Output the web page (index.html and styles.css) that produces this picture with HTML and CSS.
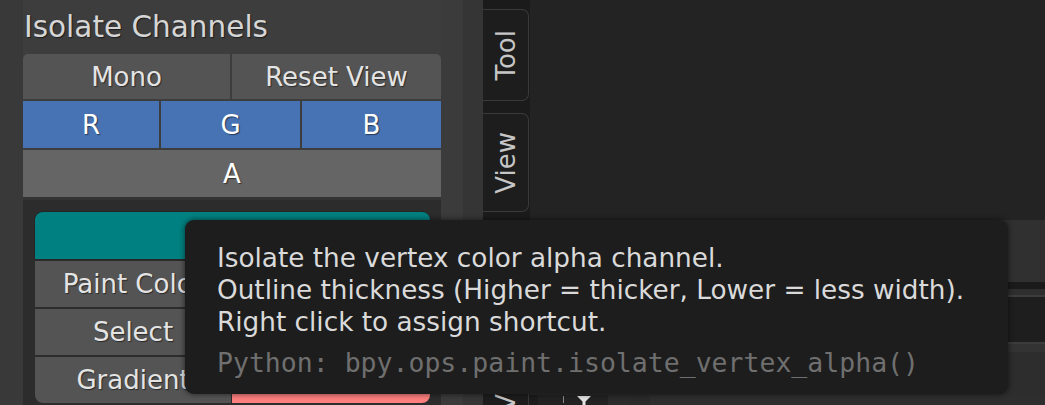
FILE: index.html
```html
<!DOCTYPE html>
<html>
<head>
<meta charset="utf-8">
<link rel="stylesheet" href="styles.css">
</head>
<body>
<div class="app">
  <aside class="sidebar">
    <section class="panel">
      <div class="panel-title">Isolate Channels</div>
      <div class="btn-row row-two">
        <div class="btn round-tl">Mono</div>
        <div class="btn round-tr">Reset View</div>
      </div>
      <div class="btn-row row-three">
        <div class="btn btn-blue">R</div>
        <div class="btn btn-blue">G</div>
        <div class="btn btn-blue">B</div>
      </div>
      <div class="btn-row row-one">
        <div class="btn btn-light">A</div>
      </div>
      <div class="box">
        <div class="btn btn-teal"></div>
        <div class="box-row">
          <div class="btn">Paint Color</div>
          <div class="btn"></div>
        </div>
        <div class="box-row">
          <div class="btn">Select</div>
          <div class="btn"></div>
        </div>
        <div class="box-row">
          <div class="btn round-bl">Gradient</div>
          <div class="btn btn-salmon round-br"></div>
        </div>
      </div>
    </section>
    <div class="gutter"></div>
  </aside>
  <div class="scroll-edge"></div>
  <nav class="tabs">
    <div class="tab tab-tool"><span>Tool</span></div>
    <div class="tab tab-view"><span>View</span></div>
    <div class="tab tab-third"><span>V</span></div>
  </nav>
  <main class="main">
    <div class="viewport"></div>
    <div class="lower">
      <div class="lower-header"></div>
      <div class="lower-sep"></div>
      <div class="lower-strip"></div>
      <div class="lower-line"></div>
      <div class="lower-field"></div>
      <div class="lower-line"></div>
      <div class="lower-pad"></div>
      <div class="lower-body"></div>
      <div class="toolbar">
        <div class="tb-a"></div>
        <div class="tb-b">
          <span class="tb-tick"></span>
          <svg class="tb-icon" width="14" height="12" viewBox="0 0 14 12"><path d="M0 0 H14 L8.5 5.5 V12 H5.5 V5.5 Z" fill="#e2e2e2"/></svg>
        </div>
        <div class="tb-c"></div>
        <div class="tb-d"></div>
        <div class="tb-e"></div>
      </div>
    </div>
  </main>
</div>
<div class="tooltip">
  <div class="tip-line">Isolate the vertex color alpha channel.</div>
  <div class="tip-line">Outline thickness (Higher = thicker, Lower = less width).</div>
  <div class="tip-line">Right click to assign shortcut.</div>
  <div class="tip-line tip-python">Python: bpy.ops.paint.isolate_vertex_alpha()</div>
</div>
</body>
</html>
```
FILE: styles.css
```css
html, body {
  margin: 0;
  padding: 0;
}
body {
  width: 1045px;
  height: 405px;
  overflow: hidden;
  position: relative;
  background: #232323;
  font-family: "DejaVu Sans", "Liberation Sans", sans-serif;
}
.app {
  display: flex;
  height: 405px;
}
.sidebar {
  width: 463px;
  flex: none;
  display: flex;
  box-sizing: border-box;
  padding-left: 23px;
  background: #393939;
}
.panel {
  width: 418px;
  flex: none;
  display: flex;
  flex-direction: column;
  background: #3d3d3d;
}
.panel-title {
  height: 54px;
  box-sizing: border-box;
  padding: 11px 0 0 1px;
  font-size: 29.5px;
  line-height: 32px;
  color: #d6d6d6;
  text-shadow: 1px 1px 1px rgba(0, 0, 0, 0.55);
  white-space: nowrap;
  flex: none;
}
.gutter {
  width: 22px;
  flex: none;
  background: #3b3b3b;
}
.scroll-edge {
  width: 20px;
  flex: none;
  background: #353535;
}
.btn-row {
  display: grid;
  gap: 2px;
  margin-bottom: 2px;
  flex: none;
}
.row-two {
  grid-template-columns: 207fr 209fr;
  height: 45px;
}
.row-three {
  grid-template-columns: 136fr 139fr 139fr;
  height: 47px;
}
.row-one {
  height: 47px;
  margin-bottom: 0;
}
.btn {
  display: flex;
  align-items: center;
  justify-content: center;
  font-size: 26px;
  line-height: 32px;
  color: #e4e4e4;
  background: #545454;
  text-shadow: 1px 1px 1px rgba(0, 0, 0, 0.5);
  white-space: nowrap;
  overflow: hidden;
}
.btn-blue {
  background: #4772b3;
  color: #ffffff;
}
.btn-light {
  background: #656565;
  color: #ffffff;
}
.btn-teal {
  height: 47px;
  flex: none;
  background: #008080;
  border-radius: 8px 8px 0 0;
  box-shadow: 0 0 0 1px #262626;
}
.btn-salmon {
  background: #fd7f7f;
}
.round-tl { border-top-left-radius: 5px; }
.round-tr { border-top-right-radius: 5px; }
.round-bl { border-bottom-left-radius: 8px; }
.round-br { border-bottom-right-radius: 8px; }
.box {
  flex: 1;
  display: flex;
  flex-direction: column;
  gap: 2px;
  padding: 12px 11px 0 12px;
  background: #2c2c2c;
  border-top: 3px solid #333333;
}
.box-row {
  display: grid;
  grid-template-columns: 196fr 198fr;
  gap: 1px;
  height: 46px;
  flex: none;
}
.tabs {
  width: 47px;
  flex: none;
  box-sizing: border-box;
  padding-top: 9px;
  display: flex;
  flex-direction: column;
  gap: 12px;
  background: #1b1b1b;
  overflow: hidden;
}
.tab {
  width: 46px;
  flex: none;
  box-sizing: border-box;
  border: 1px solid #3a3a3a;
  border-left: none;
  border-radius: 0 7px 7px 0;
  display: flex;
  align-items: center;
  justify-content: center;
  background: #1d1d1d;
}
.tab span {
  writing-mode: vertical-rl;
  transform: rotate(180deg);
  font-size: 26px;
  line-height: 30px;
  color: #c6c6c6;
  white-space: nowrap;
}
.tab-tool { height: 92px; }
.tab-view { height: 99px; }
.tab-third {
  height: 195px;
  align-items: flex-end;
  padding-bottom: 6px;
}
.main {
  flex: 1;
  display: flex;
  flex-direction: column;
  min-width: 0;
}
.viewport {
  height: 220px;
  flex: none;
  background: #232323;
}
.lower {
  flex: 1;
  display: flex;
  flex-direction: column;
  overflow: hidden;
}
.lower-header { height: 62px; flex: none; background: #303030; }
.lower-sep { height: 7px; flex: none; background: #1a1a1a; }
.lower-strip { height: 6px; flex: none; background: #2e2e2e; }
.lower-line { height: 2px; flex: none; background: #3c3c3c; }
.lower-field { height: 45px; flex: none; background: #1e1e1e; }
.lower-pad { height: 8px; flex: none; background: #333333; }
.lower-body { height: 43px; flex: none; background: #2d2d2d; }
.toolbar {
  height: 20px;
  flex: none;
  display: flex;
  background: #2e2e2e;
}
.tb-a { width: 8px; background: #1c1c1c; }
.tb-b {
  width: 70px;
  background: #222222;
  display: flex;
  align-items: flex-start;
  padding: 1px 0 0 25px;
  box-sizing: border-box;
  gap: 13px;
}
.tb-tick {
  width: 1px;
  height: 7px;
  background: #8a8a8a;
}
.tb-icon { display: block; }
.tb-c { width: 19px; background: #2b2b2b; }
.tb-d { width: 23px; background: #2a2a2a; }
.tb-e { flex: 1; background: #2e2e2e; }
.tooltip {
  position: absolute;
  left: 185px;
  top: 220px;
  width: 823px;
  box-sizing: border-box;
  padding: 22px 20px 15px 32px;
  background: #1d1d1d;
  border-radius: 9px;
  box-shadow: 0 0 5px 1px rgba(0, 0, 0, 0.45);
  color: #dadada;
  font-size: 26.3px;
  line-height: 32px;
}
.tip-line {
  white-space: nowrap;
}
.tip-python {
  margin-top: 9px;
  font-family: "DejaVu Sans Mono", "Liberation Mono", monospace;
  font-size: 26.5px;
  color: #6f6f6f;
}
```
